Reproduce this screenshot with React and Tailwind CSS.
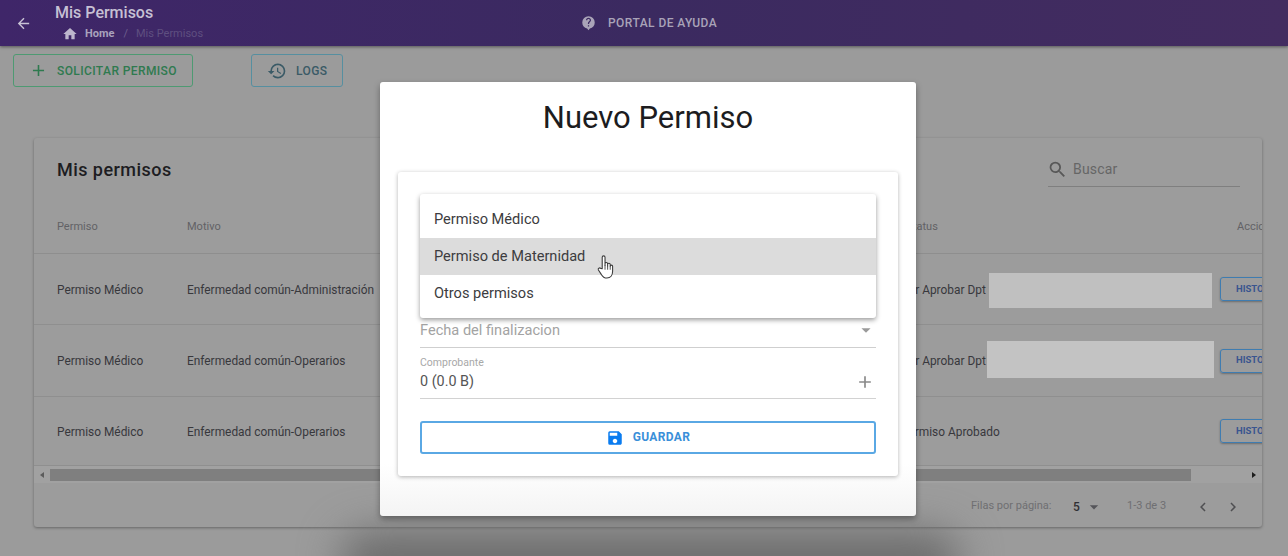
import React from "react";
import {
  MdArrowBack, MdHome, MdAdd, MdHistory, MdSearch, MdSave,
  MdArrowDropDown, MdChevronLeft, MdChevronRight,
} from "react-icons/md";

const rows = [
  { p: "Permiso Médico", m: "Enfermedad común-Administración", s: "Por Aprobar Dpt", h: "h-[71px]" },
  { p: "Permiso Médico", m: "Enfermedad común-Operarios", s: "Por Aprobar Dpt", h: "h-[72px]" },
  { p: "Permiso Médico", m: "Enfermedad común-Operarios", s: "Permiso Aprobado", h: "h-[69px]" },
];

function HelpBubble() {
  return (
    <svg width="15" height="16" viewBox="0 0 24 25">
      <path d="M12 1.5a10 10 0 0 0-10 10c0 4.8 3.3 8.8 7.8 9.8L12 24l2.2-2.7c4.500-1 7.800-5 7.800-9.800a10 10 0 0 0-10-10z" fill="#aaa4b8" />
      <path d="M13 18h-2v-2h2v2zm2.070-7.750l-.9.920C13.450 11.900 13 12.500 13 14h-2v-.5c0-1.100.45-2.100 1.170-2.830l1.240-1.260c.37-.36.59-.86.59-1.410 0-1.100-.9-2-2-2s-2 .9-2 2H8c0-2.210 1.790-4 4-4s4 1.790 4 4c0 .88-.36 1.680-.93 2.250z" fill="#3c2a61" />
    </svg>
  );
}

function Hand() {
  return (
    <svg width="18" height="26" viewBox="0 0 16 24" className="absolute left-[597px] top-[254px]">
      <path
        d="M4.500 13.500V3a1.300 1.300 0 0 1 2.600 0v7.500V9a1.200 1.200 0 0 1 2.400 0v2V9.800a1.200 1.200 0 0 1 2.400 0v1.600a1.100 1.100 0 0 1 2.200 0v4.600c0 3.600-2 6.200-5.200 6.200-3 0-4-1.200-5.400-3.600L1 14.800c-.8-1.500 1.200-2.600 2.200-1.400z"
        fill="#fff" stroke="#3a3a3a" strokeWidth="1" strokeLinejoin="round"
      />
      <path d="M7.100 10.500v4M9.500 11v3.500M11.900 11.400v3.100" stroke="#3a3a3a" strokeWidth=".8" fill="none" />
    </svg>
  );
}

export default function App() {
  return (
    <div className="relative w-[1288px] h-[556px] overflow-hidden bg-[#9b9b9b] font-['Roboto',sans-serif]">
      {/* App bar */}
      <header className="h-[46px] flex items-center bg-gradient-to-r from-[#3f2669] via-[#3b2a60] to-[#432c60] shadow-[0_1px_3px_rgba(0,0,0,0.45)]">
        <MdArrowBack className="ml-[15px] text-[17px] text-[#c9c3d6]" />
        <div className="ml-[23px] w-[526px] pb-[3px]">
          <div className="text-[16px] leading-[20px] font-medium text-[#c6c0d4] mt-[1px]">Mis Permisos</div>
          <div className="flex items-center ml-[7px] mt-[3px] text-[11px] leading-[13px]">
            <MdHome className="text-[16px] text-[#bdb6cd]" />
            <span className="ml-[7px] font-bold text-[#a9a2bd]">Home</span>
            <span className="ml-[9px] text-[#6d5f8e]">/</span>
            <span className="ml-[8px] text-[#5e4f80]">Mis Permisos</span>
          </div>
        </div>
        <HelpBubble />
        <span className="ml-[12px] text-[12px] font-medium tracking-[0.45px] text-[#a9a3b8]">PORTAL DE AYUDA</span>
      </header>

      {/* Actions */}
      <div className="flex pl-[13px] pt-[8px] gap-[58px]">
        <button className="w-[180px] h-[33px] flex items-center rounded-[3px] border border-[#4e9a72] text-[#2f7a4f]">
          <MdAdd className="ml-[15px] text-[19px]" />
          <span className="ml-[9px] text-[12px] font-medium tracking-[0.4px]">SOLICITAR PERMISO</span>
        </button>
        <button className="w-[92px] h-[33px] flex items-center rounded-[3px] border border-[#568fa0] text-[#3a5a66]">
          <MdHistory className="ml-[15px] text-[20px]" />
          <span className="ml-[9px] text-[12px] font-medium tracking-[0.4px]">LOGS</span>
        </button>
      </div>

      {/* Table card */}
      <section className="mt-[51px] ml-[34px] w-[1228px] h-[389px] rounded-[3px] bg-[#9c9c9c] overflow-hidden shadow-[0_1px_3px_rgba(0,0,0,0.35)]">
        <div className="h-[62px] flex items-center pl-[23px] pr-[22px]">
          <h2 className="text-[18px] font-medium text-[#1d1d22] tracking-[0.45px] pt-[1px]">Mis permisos</h2>
          <div className="ml-auto w-[192px] h-[33px] flex items-center border-b border-[#7f7f7f] mt-[2px]">
            <MdSearch className="ml-[-1px] text-[21px] text-[#585858]" />
            <span className="ml-[5px] text-[14px] tracking-[0.2px] text-[#666]">Buscar</span>
          </div>
        </div>
        <div className="h-[54px] flex items-center pl-[23px] pt-[1px] border-b border-[#8e8e8e] text-[11px] text-[#626266]">
          <div className="w-[130px] shrink-0">Permiso</div>
          <div className="w-[714px] shrink-0">Motivo</div>
          <div className="w-[336px] shrink-0">Estatus</div>
          <div className="shrink-0 whitespace-nowrap">Acciones</div>
        </div>
        {rows.map((r, i) => (
          <div key={i} className={`${r.h} flex items-center pl-[23px] border-b border-[#8f8f8f] text-[11.9px] text-[#38383c] last:border-b-0`}>
            <div className="w-[130px] shrink-0 pt-[3px]">{r.p}</div>
            <div className="w-[714px] shrink-0 pt-[3px]">{r.m}</div>
            <div className="w-[319px] shrink-0 pt-[3px]">{r.s}</div>
            <button className="w-[90px] h-[24px] shrink-0 rounded-[3px] border border-[#3f7cb0] text-left pl-[15px] text-[9.5px] font-bold text-[#39558f] shadow-[0_1px_2px_rgba(0,0,0,0.3)]">
              HISTORIAL
            </button>
          </div>
        ))}
        {/* horizontal scrollbar */}
        <div className="h-[17px] flex items-center bg-[#a1a1a1]">
          <div className="w-[16px] flex justify-center">
            <div className="border-y-[3px] border-y-transparent border-r-[4px] border-r-[#5c5c5c]" />
          </div>
          <div className="w-[1141px] h-[12px] bg-[#7f7f7f]" />
          <div className="ml-auto w-[16px] flex justify-center">
            <div className="border-y-[3px] border-y-transparent border-l-[4px] border-l-[#1c1c1c]" />
          </div>
        </div>
        {/* pagination */}
        <div className="h-[44px] flex items-center pl-[937px] text-[11px] text-[#6f6f72] pt-[3px]">
          <span className="w-[102px] shrink-0">Filas por página:</span>
          <span className="w-[13px] shrink-0 text-[12px] font-medium text-[#2f2f33]">5</span>
          <MdArrowDropDown className="ml-[-2px] text-[20px] text-[#55555a]" />
          <span className="ml-[23px] w-[38px] shrink-0 whitespace-nowrap">1-3 de 3</span>
          <MdChevronLeft className="ml-[29px] text-[18px] text-[#4f4f52]" />
          <MdChevronRight className="ml-[12px] text-[18px] text-[#4f4f52]" />
        </div>
      </section>

      {/* Redaction patches */}
      <div className="absolute left-[989px] top-[273px] w-[223px] h-[35px] bg-[#c0c0c0]" />
      <div className="absolute left-[987px] top-[341px] w-[227px] h-[37px] bg-[#c3c3c3]" />

      {/* Backdrop smudge below the dialog */}
      <div className="absolute left-[340px] top-[532px] w-[620px] h-[60px] rounded-full bg-[#6c6c6c] blur-[20px]" />

      {/* Dialog */}
      <div className="absolute left-[380px] top-[82px] w-[536px] h-[434px] rounded-[3px] bg-gradient-to-b from-white from-[88%] to-[#f4f4f4] px-[18px] shadow-[0_3px_6px_rgba(0,0,0,0.35)]">
        <h1 className="pt-[16px] h-[90px] text-center text-[31px] leading-[40px] text-[#1c1c20]">Nuevo Permiso</h1>
        <div className="relative h-[304px] rounded-[3px] bg-white px-[22px] pt-[146px] shadow-[0_1px_4px_rgba(0,0,0,0.3)]">
          <div className="h-[30px] flex items-start justify-between border-b border-[#cfcfcf]">
            <span className="text-[14.6px] leading-[24px] text-[#a3a3a3]">Fecha del finalizacion</span>
            <MdArrowDropDown className="text-[22px] mr-[-1px] mt-[1px] text-[#9a9a9a]" />
          </div>
          <div className="mt-[8px] h-[43px] border-b border-[#d2d2d2]">
            <div className="text-[10.5px] leading-[14px] text-[#a8a8a8]">Comprobante</div>
            <div className="flex items-center justify-between h-[22px] mt-[1px]">
              <span className="text-[14.4px] text-[#555]">0 (0.0 B)</span>
              <MdAdd className="text-[20px] mr-[1px] text-[#8a8a8a]" />
            </div>
          </div>
          <button className="mt-[22px] w-full h-[33px] flex items-center justify-center rounded-[3px] border-2 border-[#5aa8e4] text-[#3a8fd9]">
            <MdSave className="text-[18px] text-[#0a7cf0]" />
            <span className="ml-[9px] pb-[2px] text-[12px] font-bold tracking-[0.35px]">GUARDAR</span>
          </button>
          {/* Open select menu */}
          <ul className="absolute left-[22px] top-[22px] w-[456px] h-[124px] rounded-[3px] bg-white py-[8px] text-[14.6px] text-[#3c3c40] shadow-[0_2px_5px_rgba(0,0,0,0.4)]">
            <li className="h-[36px] flex items-center pl-[14px]">Permiso Médico</li>
            <li className="h-[37px] flex items-center pl-[14px] bg-[#dcdcdc]">Permiso de Maternidad</li>
            <li className="h-[36px] flex items-center pl-[14px] pt-[1px]">Otros permisos</li>
          </ul>
        </div>
      </div>

      <Hand />
    </div>
  );
}
